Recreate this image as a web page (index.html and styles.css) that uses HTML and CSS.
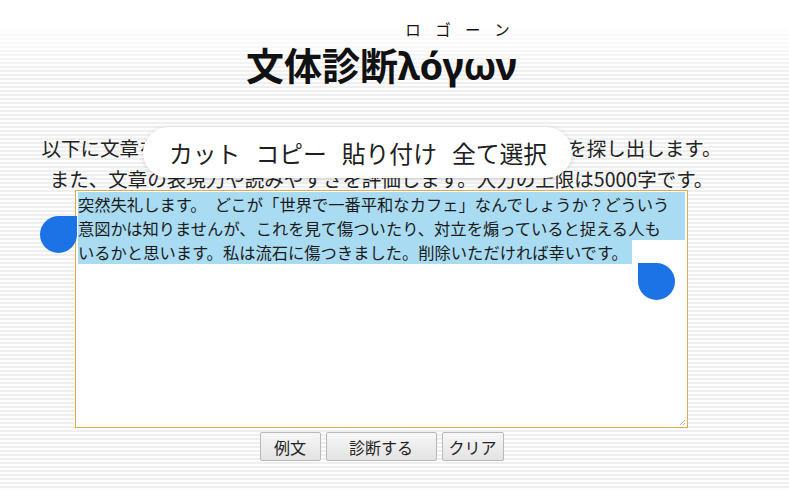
FILE: index.html
```html
<!DOCTYPE html>
<html lang="ja">
<head>
<meta charset="utf-8">
<title>文体診断λόγων</title>
<link rel="stylesheet" href="styles.css">
</head>
<body>
<div class="page">
  <h1 class="title">文体診断<ruby class="greek">&#x3BB;&#x3CC;&#x3B3;&#x3C9;&#x3BD;<rt>ロゴーン</rt></ruby></h1>
  <p class="intro">以下に文章を入力すると、他人を傷つける可能性のある表現を探し出します。<br>また、文章の表現力や読みやすさを評価します。入力の上限は5000字です。</p>
  <div class="editor">
    <div class="line full">突然失礼します。　どこが「世界で一番平和なカフェ」なんでしょうか？どういう</div>
    <div class="line full">意図かは知りませんが、これを見て傷ついたり、対立を煽っていると捉える人も</div>
    <div class="line"><span class="sel">いるかと思います。私は流石に傷つきました。削除いただければ幸いです。</span></div>
    <span class="handle handle-start"></span>
    <span class="handle handle-end"></span>
    <svg class="grip" width="7" height="7" viewBox="0 0 7 7"><path d="M6 1 L1 6 M6 4 L4 6" stroke="#b8b8b8" stroke-width="1"/></svg>
  </div>
  <div class="buttons">
    <button class="btn btn-sample">例文</button>
    <button class="btn btn-run">診断する</button>
    <button class="btn btn-clear">クリア</button>
  </div>
  <div class="menu">
    <span>カット</span>
    <span>コピー</span>
    <span>貼り付け</span>
    <span>全て選択</span>
  </div>
</div>
</body>
</html>
```
FILE: styles.css
```css
html, body {
  margin: 0;
  height: 490px;
  overflow: hidden;
}
body {
  font-family: "Noto Sans CJK JP", "Noto Sans", sans-serif;
  color: #1e1e1e;
  background:
    linear-gradient(to bottom, #ffffff 0, #ffffff 24px, rgba(255,255,255,0) 75px),
    repeating-linear-gradient(to bottom, #fdfdfd 0, #fdfdfd 2px, #efefef 2px, #efefef 4px);
}
.page {
  position: relative;
  width: 763px;
  display: flex;
  flex-direction: column;
  align-items: center;
}
.title {
  box-sizing: border-box;
  height: 111px;
  margin: 0;
  padding-top: 39px;
  font-size: 38px;
  font-weight: bold;
  line-height: 50px;
  color: #111;
}
.greek {
  font-family: "Noto Sans", "DejaVu Sans", sans-serif;
}
.title rt {
  position: relative;
  top: -12px;
  font-family: "Noto Sans CJK JP", sans-serif;
  font-size: 15.5px;
  font-weight: normal;
  line-height: 16px;
}
.intro {
  margin: 21px 0 -4px;
  font-size: 19.5px;
  line-height: 31px;
  text-align: center;
  color: #222;
}
.editor {
  position: relative;
  box-sizing: border-box;
  width: 613px;
  height: 238px;
  border: 1px solid #e2aa52;
  background: #fff;
  padding: 1px 2px;
  font-size: 16.3px;
  line-height: 24px;
  color: #1a1a1a;
}
.line {
  white-space: nowrap;
  overflow: hidden;
  height: 24px;
}
.line.full,
.sel {
  background: #a9dbf3;
}
.sel {
  display: inline-block;
  padding-right: 4px;
}
.handle {
  position: absolute;
  width: 37px;
  height: 37px;
  background: #1b73e6;
}
.handle-start {
  left: -36px;
  top: 25px;
  border-radius: 50% 0 50% 50%;
}
.handle-end {
  left: 562px;
  top: 72px;
  border-radius: 0 50% 50% 50%;
}
.grip {
  position: absolute;
  right: 1px;
  bottom: 1px;
}
.buttons {
  display: flex;
  gap: 5px;
  margin-top: 4px;
}
.btn {
  box-sizing: border-box;
  height: 29px;
  padding: 0;
  font-family: "Noto Sans CJK JP", sans-serif;
  font-size: 16px;
  color: #222;
  background: linear-gradient(to bottom, #f7f7f7, #e3e3e3);
  border: 1px solid #b9b9b9;
  border-radius: 2px;
}
.btn-sample { width: 61px; }
.btn-run { width: 111px; }
.btn-clear { width: 62px; }
.menu {
  position: absolute;
  left: 143px;
  top: 127px;
  box-sizing: border-box;
  width: 429px;
  height: 51px;
  padding-left: 26px;
  display: flex;
  align-items: center;
  gap: 15px;
  background: #fff;
  border-radius: 26px;
  box-shadow: 0 1px 5px rgba(0,0,0,0.16);
  font-family: "Noto Sans CJK JP", "Roboto", sans-serif;
  font-size: 23.8px;
  color: #202020;
}
```
